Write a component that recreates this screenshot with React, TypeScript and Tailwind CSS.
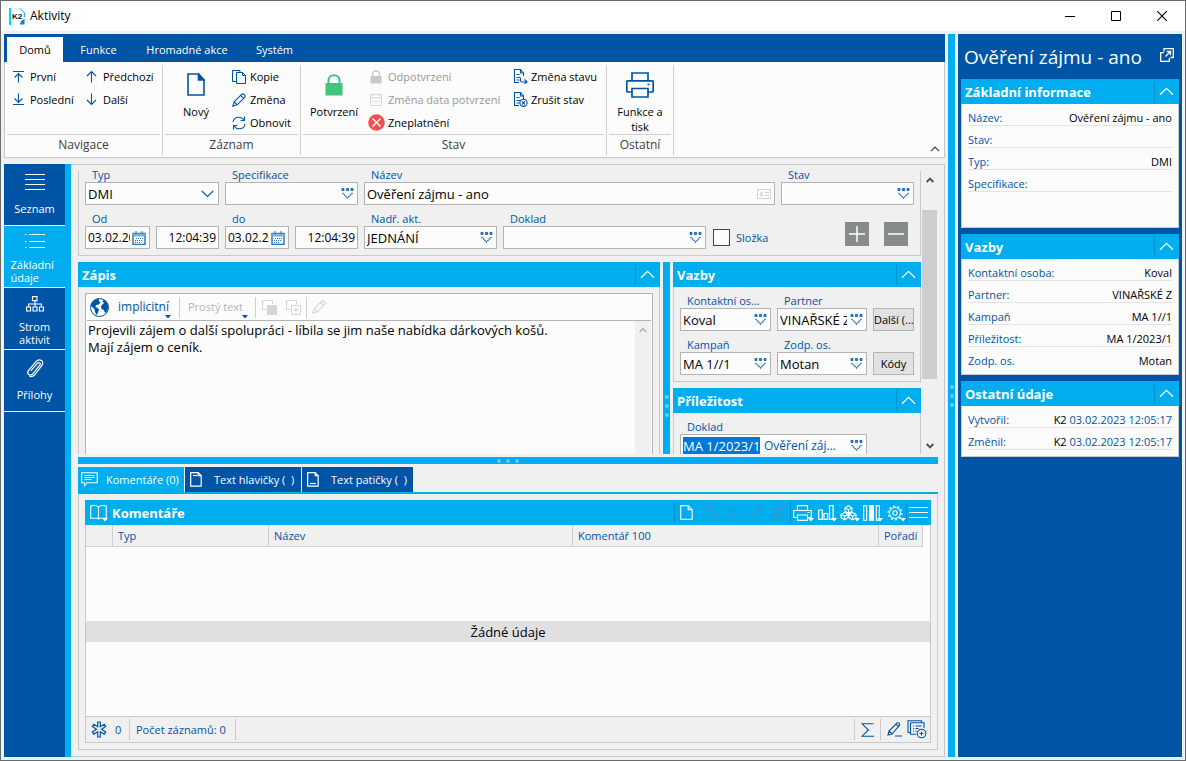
import React from "react";

type IconProps = { className?: string };

function Svg({ w, h, className = "", children, sw = 1.1 }: { w: number; h: number; className?: string; children: React.ReactNode; sw?: number }) {
  return (
    <svg width={w} height={h} viewBox={`0 0 ${w} ${h}`} fill="none" stroke="currentColor" strokeWidth={sw} className={`shrink-0 ${className}`} aria-hidden="true">
      {children}
    </svg>
  );
}

const First = () => <Svg w={13} h={13}><path d="M1 1.5h11M6.5 12.5v-9M2.5 7.500l4-4 4 4" /></Svg>;
const Last = () => <Svg w={13} h={13}><path d="M1 11.5h11M6.5 0.5v9M2.5 5.500l4 4 4-4" /></Svg>;
const Up = () => <Svg w={12} h={13}><path d="M6.5 12.5v-11M2 6l4.500-4.500L11 6" /></Svg>;
const Down = () => <Svg w={12} h={13}><path d="M6.5 0.500v11M2 7l4.500 4.500L11 7" /></Svg>;
const NewDoc = () => <Svg w={18} h={23} sw={1.6}><path d="M1 1h10.500l5.500 6v15H1z" /><path d="M11.500 1v6H17z" fill="currentColor" /></Svg>;
const Copy = () => <Svg w={14} h={14} sw={1}><path d="M5 11.500H.5V.5H8v2" /><path d="M4.500 2.500h6l3 3v8h-9z" /><path d="M10.500 2.500v3h3" /></Svg>;
const Pencil = ({ className }: IconProps) => (
  <Svg w={14} h={14} sw={1.1} className={className}><path d="M.8 13.200l1.400-4.400L9.800 1.200c1.500-1.200 4.200 1.400 3 3L5.200 11.800z" /><path d="M2.200 8.800l3 3M8.600 2.400l3 3" /></Svg>
);
const Refresh = () => <Svg w={14} h={14}><path d="M1 6C1.500 2.500 4 1.200 7 1.200c2.200 0 3.800 1 5 2.800M12.500 .5V4.500H8.700M13 8c-.5 3.500-3 4.800-6 4.800-2.200 0-3.800-1-5-2.800M1.500 13.500V9.500h3.800" /></Svg>;
const Lock = () => (
  <Svg w={18} h={22} sw={2} className="text-[#40c57c]"><path d="M3.500 11V6.500c0-7 11-7 11 0V11" /><path d="M.500 9h17v12.500h-17z" fill="currentColor" stroke="none" /></Svg>
);
const SmallLock = () => (
  <Svg w={16} h={14} sw={1.3} className="text-[#c8c8c8]"><path d="M4.500 7V4c0-4 7-4 7 0v3" /><path d="M2.500 6h11v7.500h-11z" fill="currentColor" stroke="none" /></Svg>
);
const CalGray = () => (
  <Svg w={16} h={13} sw={1} className="text-[#d8d8d8]"><path d="M2.500 1.500h11v11h-11zM2.500 4.500h11M5 0v3M11 0v3" /><path d="M8 6v5M5.500 8.500h5M4.500 6.500v4M11.500 6.500v4" strokeDasharray="1 1" /></Svg>
);
const Cross = () => (
  <Svg w={17} h={17} sw={1.4}><circle cx="8.500" cy="8.500" r="8.300" fill="#f05050" stroke="none" /><path d="M4.500 4.500l8 8M12.500 4.500l-8 8" stroke="#fff" /></Svg>
);
const DocState = ({ off }: { off?: boolean }) => (
  <Svg w={15} h={15}>
    <path d="M6 13.500H1.500v-13h6L10.500 4v3" /><path d="M7.500 .5V4h3M3.500 5.500h3M3.500 8.500h4M3.500 11h3" />
    {off ? <><circle cx="10.500" cy="10.800" r="3.600" /><path d="M9 9.300l3 3M12 9.300l-3 3" /></> : <path d="M7.500 9v2.500c0 1 .5 1.500 1.500 1.500h5M11.500 10.500l2.500 2.500-2.500 2" />}
  </Svg>
);
const Printer = () => (
  <Svg w={28} h={26} sw={1.7}><path d="M6 9V1h16v8M6 20H2c-1 0-1.200-.5-1.200-1.200V10c0-.8.300-1.200 1.200-1.200h24c.9 0 1.200.4 1.200 1.200v8.800c0 .8-.3 1.200-1.200 1.200h-4M6 16.500h16V25H6z" /><path d="M21.500 12.500h2" /></Svg>
);
const Logo = () => (
  <svg width="16" height="17" viewBox="0 0 16 17" aria-hidden="true" className="shrink-0">
    <path d="M0 0h2v17H0z" fill="#00d8f5" />
    <path d="M6 .5h5l4.500 4V13" fill="none" stroke="#b8f0fa" />
    <path d="M11 .5l4.500 4V9" fill="none" stroke="#20b8e8" />
    <path d="M15.500 11v5.500H11c0-3 2-4.500 4.500-5.500z" fill="#1680d8" />
    <text x="3" y="10.500" fontSize="8" fontWeight="900" fontFamily="Liberation Sans, sans-serif" fill="#001428">K2</text>
  </svg>
);
const Lookup = () => (
  <Svg w={13} h={11} sw={1} className="text-[#1f69b0]">
    <path d="M1 .5h2v2H1zM5.500.5h2v2h-2zM10 .5h2v2h-2z" fill="#4f8cc4" /><path d="M1.500 5l5 5 5-5" strokeDasharray="1.600 .5" strokeWidth={1.3} />
  </Svg>
);
const Calendar = () => (
  <Svg w={14} h={14} sw={1} className="text-[#2a70b4]">
    <path d="M1 2.500h12v11H1z" strokeWidth={1.4} /><path d="M1 3h12v2H1z" fill="#9bbfe0" stroke="#6ea3d2" /><path d="M4 0v3M10 0v3" />
    <path d="M4 7.500h7M3 9.500h8M3 11.500h6" strokeDasharray="1 1" />
  </Svg>
);
const CaretDown = () => <Svg w={13} h={8}><path d="M.8 1l5.700 5.500L12.200 1" /></Svg>;
const Chevron = () => <Svg w={15} h={9} sw={1.3}><path d="M1 7.800L7.500 1.300 14 7.800" /></Svg>;
const ScrollArrow = ({ down, light }: { down?: boolean; light?: boolean }) => (
  <Svg w={8} h={6} sw={1.9} className={light ? "text-[#bdbdbd]" : "text-[#505050]"}><path d={down ? "M.7 1L4 4.300 7.300 1" : "M.7 5L4 1.700 7.300 5"} /></Svg>
);
const DropMark = ({ className = "" }: IconProps) => <svg width="6" height="4" viewBox="0 0 6 4" className={className} aria-hidden="true"><path d="M0 0h6L3 3.500z" fill="currentColor" /></svg>;

/* ---------- shared pieces ---------- */

function PanelHeader({ title }: { title: string }) {
  return (
    <div className="flex h-[25px] shrink-0 items-center bg-[#00adef] pl-1 text-[13px] font-bold text-white">
      <h2 className="flex-1 whitespace-nowrap">{title}</h2>
      <button aria-label={`Sbalit ${title}`} className="flex h-[21px] w-[25px] items-center justify-center border-l border-[#0093d0] pr-0.5 text-white"><Chevron /></button>
    </div>
  );
}

function Field({ label, id, className = "", children }: { label: string; id: string; className?: string; children: React.ReactNode }) {
  return (
    <div className={`min-w-0 ${className}`}>
      <label htmlFor={id} className="flex h-[21px] items-end pl-[7px] leading-[15px] whitespace-nowrap text-[#0054a6]">{label}</label>
      {children}
    </div>
  );
}

function TextBox({ id, value = "", icon, right, small, label }: { id: string; value?: string; icon?: React.ReactNode; right?: boolean; small?: boolean; label?: string }) {
  return (
    <div className="flex h-[23px] items-center border border-[#b4b4b4] bg-[#fcfcfc] pl-0.5">
      <input id={id} aria-label={label} defaultValue={value} className={`h-full w-0 min-w-0 flex-1 bg-transparent text-black outline-none ${small ? "text-[12px]" : "text-[13px]"} ${right ? "pr-0.5 text-right" : ""}`} />
      {icon && <button type="button" aria-label={`Vybrat ${id}`} className="flex w-[19px] shrink-0 items-center justify-center pr-px">{icon}</button>}
    </div>
  );
}

function Dots({ vertical }: { vertical?: boolean }) {
  return (
    <div className={`flex gap-[5px] ${vertical ? "flex-col" : ""}`}>
      <i className="size-1 rounded-full bg-[#5fcbf7]" /><i className="size-1 rounded-full bg-[#5fcbf7]" /><i className="size-1 rounded-full bg-[#5fcbf7]" />
    </div>
  );
}

/* ---------- ribbon ---------- */

function Group({ title, className, children }: { title: string; className: string; children: React.ReactNode }) {
  return (
    <section className={`flex shrink-0 flex-col border-r border-[#d0d0d0] px-0.5 ${className}`}>
      <div className="flex h-[69px]">{children}</div>
      <h3 className="h-[21px] border-t border-[#d0d0d0] text-center text-[12px] leading-5 text-[#404040]">{title}</h3>
    </section>
  );
}

function Cmd({ icon, text, disabled, iconBox = "w-[18px]" }: { icon: React.ReactNode; text: string; disabled?: boolean; iconBox?: string }) {
  return (
    <button disabled={disabled} className={`flex h-[23px] items-center whitespace-nowrap ${disabled ? "text-[#989898]" : "text-black"}`}>
      <span className={`flex shrink-0 text-[#0054a6] ${iconBox}`}>{icon}</span>{text}
    </button>
  );
}

function BigCmd({ icon, text, className }: { icon: React.ReactNode; text: string; className: string }) {
  return (
    <button className={`flex shrink-0 flex-col items-center text-black ${className}`}>
      <span className="flex h-[39px] items-center text-[#0054a6]">{icon}</span>
      <span className="leading-[15px]">{text}</span>
    </button>
  );
}

function Ribbon() {
  return (
    <header className="shrink-0">
      <nav className="flex h-7 items-stretch bg-[#0054a6] pt-[3px] pl-[3px] text-white">
        <button className="w-14 bg-[#fcfcfc] text-black">Domů</button>
        <button className="w-[71px]">Funkce</button>
        <button className="w-[106px]">Hromadné akce</button>
        <button className="w-[69px]">Systém</button>
      </nav>
      <div className="flex h-24 border-x border-b border-[#c8c8c8] bg-[#fcfcfc] pt-[3px]">
        <Group title="Navigace" className="h-[90px] w-[158px]">
          <div className="ml-[5px] w-[73px]"><Cmd icon={<First />} text="První" /><Cmd icon={<Last />} text="Poslední" /></div>
          <div><Cmd icon={<Up />} text="Předchozí" /><Cmd icon={<Down />} text="Další" /></div>
        </Group>
        <Group title="Záznam" className="h-[90px] w-[138px]">
          <BigCmd icon={<NewDoc />} text="Nový" className="w-[62px]" />
          <div className="ml-[5px]"><Cmd icon={<Copy />} text="Kopie" /><Cmd icon={<Pencil />} text="Změna" /><Cmd icon={<Refresh />} text="Obnovit" /></div>
        </Group>
        <Group title="Stav" className="h-[90px] w-[306px]">
          <BigCmd icon={<Lock />} text="Potvrzení" className="w-[62px]" />
          <div className="ml-[3px] w-[145px]">
            <Cmd icon={<SmallLock />} text="Odpotvrzení" disabled iconBox="w-5" />
            <Cmd icon={<CalGray />} text="Změna data potvrzení" disabled iconBox="w-5" />
            <Cmd icon={<Cross />} text="Zneplatnění" iconBox="w-5" />
          </div>
          <div><Cmd icon={<DocState />} text="Změna stavu" /><Cmd icon={<DocState off />} text="Zrušit stav" /></div>
        </Group>
        <Group title="Ostatní" className="h-[90px] w-[67px]">
          <BigCmd icon={<Printer />} text="Funkce a tisk" className="w-[62px] px-1" />
        </Group>
        <button aria-label="Sbalit pás karet" className="mr-1 mb-[5px] ml-auto self-end text-[#404040]"><Svg w={10} h={6}><path d="M1 5l4-4 4 4" /></Svg></button>
      </div>
    </header>
  );
}

/* ---------- left navigation ---------- */

function NavItem({ icon, text, active }: { icon: React.ReactNode; text: string; active?: boolean }) {
  return (
    <button className={`flex h-[62px] w-full flex-col items-center justify-between border-b border-white pt-2 pb-[3px] text-white ${active ? "bg-[#00adef]" : ""}`}>
      {icon}
      <span className={`flex min-h-[27px] items-center text-center leading-[13px] ${active ? "w-[48px] text-left" : "w-[46px] justify-center"}`}>{text}</span>
    </button>
  );
}

function SideNav() {
  return (
    <nav className="w-[67px] shrink-0 border-r-[6px] border-[#00adef] bg-[#0054a6]">
      <NavItem text="Seznam" icon={<Svg w={20} h={20} sw={1}><path d="M0 2.500h20M0 7.500h20M0 12.500h20M0 17.500h20" /></Svg>} />
      <NavItem active text="Základní údaje" icon={<Svg w={20} h={15} sw={1}><path d="M4 .5h16M4 7.500h16M4 13.500h16M0 .5h1.500M0 7.500h1.500M0 13.500h1.500" /></Svg>} />
      <NavItem text="Strom aktivit" icon={<Svg w={18} h={16}><path d="M6.500.6h4.500v4H6.500zM.6 11h4v4h-4zM7 11h4v4H7zM13.400 11h4v4h-4zM9 4.600V11M2.600 11V8h12.800v3" /></Svg>} />
      <NavItem text="Přílohy" icon={<Svg w={18} h={20} sw={1.2}><path d="M4.800 12.800L11.500 5.200c1.700-1.600 3.700.2 2.300 2L7 15.600c-2.800 3-6.800.4-4.600-3L10 3.600c3.500-4 9-.2 5.800 4L8.500 17c-1.500 1.500-3.500 2-5.300 1.200" /></Svg>} />
    </nav>
  );
}

/* ---------- form ---------- */

const lookup = <Lookup />;

function HeadForm() {
  return (
    <form className="border-x border-b border-[#c8c8c8] px-1.5 pb-1.5">
      <div className="flex gap-1.5">
        <Field label="Typ" id="typ" className="w-[134px]">
          <div className="relative h-[23px] border border-[#b4b4b4] bg-[#fcfcfc]">
            <select id="typ" defaultValue="DMI" className="h-full w-full appearance-none bg-transparent pl-0.5 text-[13px] text-black outline-none"><option>DMI</option></select>
            <span className="pointer-events-none absolute top-[7px] right-1 text-[#0054a6]"><CaretDown /></span>
          </div>
        </Field>
        <Field label="Specifikace" id="spec" className="w-[133px]"><TextBox id="spec" icon={lookup} /></Field>
        <Field label="Název" id="nazev" className="flex-1">
          <TextBox id="nazev" value="Ověření zájmu - ano" icon={<Svg w={14} h={10} sw={1} className="text-[#d4d4d4]"><path d="M.5.5h13v9H.5zM8 3.500h4M8 6.500h4M3 7.500l1.500-5 1.500 5M3.500 6h2.500" /></Svg>} />
        </Field>
        <Field label="Stav" id="stav" className="w-[133px]"><TextBox id="stav" icon={lookup} /></Field>
      </div>
      <div className="flex items-end gap-1.5">
        <div className="flex w-[134px] items-end gap-1.5">
          <Field label="Od" id="od" className="w-[65px]"><TextBox id="od" value="03.02.2023" icon={<Calendar />} small /></Field>
          <div className="flex-1"><TextBox id="odcas" label="Od čas" value="12:04:39" right small /></div>
        </div>
        <div className="flex w-[133px] items-end gap-1.5">
          <Field label="do" id="do" className="w-16"><TextBox id="do" value="03.02.2023" icon={<Calendar />} small /></Field>
          <div className="flex-1"><TextBox id="docas" label="Do čas" value="12:04:39" right small /></div>
        </div>
        <Field label="Nadř. akt." id="nadr" className="w-[133px]"><TextBox id="nadr" value="JEDNÁNÍ" icon={lookup} /></Field>
        <Field label="Doklad" id="doklad" className="w-[203px]"><TextBox id="doklad" icon={lookup} /></Field>
        <label className="flex h-[23px] flex-1 items-center gap-1.5 pl-px text-[#0054a6]">
          <input type="checkbox" className="size-[17px] appearance-none border border-[#0054a6] bg-[#fcfcfc]" />Složka
        </label>
        <div className="mr-1.5 mb-[3px] flex gap-[15px] text-white">
          <button type="button" aria-label="Přidat" className="flex size-6 items-center justify-center bg-[#878b8b]"><Svg w={18} h={18} sw={1.5}><path d="M9 1v16M1 9h16" /></Svg></button>
          <button type="button" aria-label="Odebrat" className="flex size-6 items-center justify-center bg-[#878b8b]"><Svg w={18} h={18} sw={1.5}><path d="M1 9h16" /></Svg></button>
        </div>
      </div>
    </form>
  );
}

function Notes() {
  return (
    <section className="flex min-w-0 flex-1 flex-col">
      <PanelHeader title="Zápis" />
      <div className="flex min-h-0 flex-1 border-x border-[#c8c8c8] px-1.5 pt-1.5">
        <div className="flex min-w-0 flex-1 flex-col border-x border-t border-[#b4b4b4] bg-[#fcfcfc] px-px">
          <div className="flex h-[27px] shrink-0 items-center border-b border-[#b4b4b4] text-[#0054a6]">
            <svg width="19" height="19" viewBox="0 0 19 19" className="ml-[3px] shrink-0" aria-hidden="true">
              <circle cx="9.500" cy="9.500" r="9" fill="#fcfcfc" stroke="#0054a6" />
              <path d="M2.500 4C4 2 7 .5 9.500.7L8.500 3l2 1-1.500 2.500-3 .5-.5 2 2 1 1.500 1.500-1 3-1.500 2.500L5 14l-.5-3L2 9 1 8c0-1.500.7-3 1.500-4z" fill="#0054a6" />
              <path d="M12 3l2.500-1C17 4 18.500 7 18.200 10l-1.700 4-1.500 1-1-3-2.500-1-.5-3 2-2 1-1z" fill="#0054a6" />
            </svg>
            <button className="relative ml-[9px] w-[53px] text-left text-[12px]">implicitní<DropMark className="absolute right-0 bottom-[-4px]" /></button>
            <span className="mx-2 h-[21px] w-px bg-[#d0d0d0]" />
            <button disabled className="relative w-[60px] text-left whitespace-nowrap text-[#b4b4b4]">Prostý text<DropMark className="absolute right-0 bottom-[-4px] text-[#0054a6]" /></button>
            <span className="ml-[7px] h-[21px] w-px bg-[#d0d0d0]" />
            <Svg w={15} h={15} sw={1} className="ml-[6px] text-[#d4d4d4]"><path d="M4 9.500H.5V.5h10V4" /><path d="M5.500 5.500h9v9h-9z" fill="#d4d4d4" /></Svg>
            <Svg w={15} h={15} sw={1} className="ml-[9px] text-[#d4d4d4]"><path d="M4 9.500H.5V.5h10V4M5.500 5.500h9v9h-9zM10 7.500v5M7.500 10h5" /></Svg>
            <span className="mx-[5px] h-[21px] w-px bg-[#d0d0d0]" />
            <Pencil className="text-[#d4d4d4]" />
          </div>
          <div className="flex min-h-0 flex-1">
            <textarea aria-label="Zápis" className="min-w-0 flex-1 resize-none overflow-hidden bg-transparent pt-px pl-px text-[13px] leading-[17px] text-black outline-none" defaultValue={"Projevili zájem o další spolupráci - líbila se jim naše nabídka dárkových košů.\nMají zájem o ceník."} />
            <div className="flex w-4 shrink-0 justify-center bg-[#f0f0f0] pt-1.5"><ScrollArrow light /></div>
          </div>
        </div>
      </div>
    </section>
  );
}

function Relations() {
  const btn = "h-[23px] w-[41px] shrink-0 border border-[#b4b4b4] bg-[#e1e1e1] whitespace-nowrap text-black";
  return (
    <div className="flex w-[248px] shrink-0 flex-col gap-1.5">
      <section>
        <PanelHeader title="Vazby" />
        <div className="border-x border-b border-[#c8c8c8] px-1.5 pb-1.5">
          <div className="flex items-end gap-1.5">
            <Field label="Kontaktní os..." id="kontakt" className="w-[91px]"><TextBox id="kontakt" value="Koval" icon={lookup} /></Field>
            <Field label="Partner" id="partner" className="flex-1"><TextBox id="partner" value="VINAŘSKÉ Z" icon={lookup} /></Field>
            <button className={btn}>Další (...</button>
          </div>
          <div className="flex items-end gap-1.5">
            <Field label="Kampaň" id="kampan" className="w-[91px]"><TextBox id="kampan" value="MA 1//1" icon={lookup} /></Field>
            <Field label="Zodp. os." id="zodp" className="flex-1"><TextBox id="zodp" value="Motan" icon={lookup} /></Field>
            <button className={btn}>Kódy</button>
          </div>
        </div>
      </section>
      <section>
        <PanelHeader title="Příležitost" />
        <div className="border-x border-b border-[#c8c8c8] px-1.5 pb-1.5">
          <Field label="Doklad" id="pdoklad" className="mr-[47px]">
            <div className="flex h-[23px] items-center border border-[#b4b4b4] bg-[#fcfcfc] pl-0.5 text-[13px]">
              <input id="pdoklad" defaultValue="MA 1/2023/1" className="h-[18px] w-[77px] shrink-0 bg-[#0078d7] text-white outline-none" />
              <span className="min-w-0 flex-1 pl-1 text-[12px] whitespace-nowrap text-[#0054a6]">Ověření záj...</span>
              <button aria-label="Vybrat doklad" className="flex w-[19px] shrink-0 justify-center pr-px">{lookup}</button>
            </div>
          </Field>
        </div>
      </section>
    </div>
  );
}

function Detail() {
  return (
    <div className="flex h-[283px] shrink-0 overflow-hidden">
      <div className="-mt-2.5 flex min-w-0 flex-1 flex-col gap-1.5">
        <HeadForm />
        <div className="flex min-h-0 flex-1 gap-[3px]">
          <Notes />
          <div className="flex w-[7px] shrink-0 justify-center bg-[#00adef] pt-[133px]"><Dots vertical /></div>
          <Relations />
        </div>
      </div>
      <div className="ml-px flex w-[15px] flex-col items-center justify-between pt-1.5 pb-[5px]">
        <ScrollArrow />
        <div className="mt-[27px] mb-auto h-[169px] w-full bg-[#cdcdcd]" />
        <ScrollArrow down />
      </div>
      <div className="w-px" />
    </div>
  );
}

/* ---------- comments ---------- */

const DocMark = ({ foot }: { foot?: boolean }) => (
  <Svg w={12} h={15} sw={1.2}><path d="M.7.700h7.500l3 3v10.500H.7z" /><path d="M8.200.7v3h3" /><path d={foot ? "M3 11.500h6" : "M3 3.500h4"} /></Svg>
);

function ToolIcon({ children, mark, dim, label }: { children: React.ReactNode; mark?: boolean; dim?: boolean; label: string }) {
  return (
    <button aria-label={label} disabled={dim} className={`relative flex h-full w-[23px] items-center justify-center ${dim ? "text-[#2b9ccb]" : "text-white"}`}>
      {children}{mark && <DropMark className="absolute right-0 bottom-[3px]" />}
    </button>
  );
}

function Comments() {
  return (
    <div className="flex min-h-0 flex-1 flex-col">
      <div className="flex h-[27px] shrink-0 gap-px border-b-2 border-[#00adef]" role="tablist">
        <button role="tab" className="flex w-[106px] items-center gap-2 bg-[#00adef] pl-[3px] whitespace-nowrap text-white">
          <Svg w={17} h={15}><path d="M.7.700h15.500v10H6l-2.500 3v-3H.7zM3.500 3.500h10M3.500 5.500h10M3.500 7.500h7" /></Svg>Komentáře (0)
        </button>
        <button role="tab" className="flex w-[116px] items-center gap-3 bg-[#0054a6] pl-[5px] whitespace-pre text-white"><DocMark />{"Text hlavičky (  )"}</button>
        <button role="tab" className="flex w-[111px] items-center gap-3 bg-[#0054a6] pl-[5px] whitespace-pre text-white"><DocMark foot />{"Text patičky (  )"}</button>
      </div>
      <div className="flex min-h-0 flex-1 border-x border-b border-[#c8c8c8] p-1.5">
        <div className="flex min-w-0 flex-1 flex-col border-b border-[#c8c8c8]">
          <div className="flex h-[25px] shrink-0 items-center bg-[#00adef] pr-px text-white">
            <button aria-label="Knihy" className="relative ml-[5px] flex h-full w-[22px] items-center"><Svg w={17} h={15}><path d="M8.500 2v11.500M8.500 2C7 .5 3 .5.700 1v12.200h6.800l1 1 1-1h6.800V1C14 .500 10 .5 8.500 2z" /></Svg><DropMark className="absolute right-1 bottom-[3px]" /></button>
            <h2 className="flex-1 text-[13px] font-bold">Komentáře</h2>
            <span className="h-[21px] w-px bg-[#0093d0]" />
            <ToolIcon label="Nový"><Svg w={13} h={15}><path d="M.7.700h7.500l4 4v9.500H.7zM8.200.7v4h4" /></Svg></ToolIcon>
            <ToolIcon label="Kopie" dim><Copy /></ToolIcon>
            <ToolIcon label="Spustit" dim><Svg w={11} h={12}><path d="M1 1l9 5-9 5z" /></Svg></ToolIcon>
            <ToolIcon label="Změna" dim><Pencil /></ToolIcon>
            <ToolIcon label="Smazat" dim><Svg w={12} h={14}><path d="M0 2.500h12M4 2V.700h4V2M1.500 3v10.300h9V3M4 5v6M6 5v6M8 5v6" /></Svg></ToolIcon>
            <span className="h-[21px] w-px bg-[#0093d0]" />
            <ToolIcon label="Tisk" mark><Svg w={19} h={16} sw={1.2}><path d="M4.500 5.500V.700h10v4.800M4.500 12.500H.7v-7h17.600v7h-3.800M4.500 10h10v5.300h-10zM14.500 7.500h2" /></Svg></ToolIcon>
            <ToolIcon label="Graf" mark><Svg w={16} h={15} sw={1.2}><path d="M.7 5h3.600v9.300H.7zM6 8.500h3.600v5.800H6zM11.500.7h3.600v13.600h-3.600z" /></Svg></ToolIcon>
            <ToolIcon label="Kostka" mark><Svg w={17} h={16}><path d="M8.500.7l3.500 2v3.600l-3.500 2L5 6.300V2.700zM5 2.700l3.500 2 3.500-2M8.500 4.700v3.600M4.500 7.500L8 9.300v3.500l-3.500 2L1 12.800V9.300zM1 9.300l3.500 2L8 9.300M4.500 11.300v3.500M12.500 7.500L16 9.300v3.500l-3.500 2L9 12.800V9.300zM9 9.300l3.500 2L16 9.300M12.500 11.300v3.500" /></Svg></ToolIcon>
            <ToolIcon label="Sloupce" mark><Svg w={17} h={16}><path d="M.7.700h3v14.600h-3zM13.300.7h3v14.600h-3z" /><path d="M6.500.7h4v14.600h-4z" fill="#fff" /></Svg></ToolIcon>
            <ToolIcon label="Nastavení" mark><Svg w={16} h={16}><circle cx="8" cy="8" r="5.500" /><circle cx="8" cy="8" r="2.200" /><circle cx="8" cy="8" r="6.900" strokeDasharray="2.200 2.130" /></Svg></ToolIcon>
            <span className="h-[21px] w-px bg-[#0093d0]" />
            <ToolIcon label="Nabídka"><Svg w={19} h={13} sw={1}><path d="M0 1.500h19M0 6.500h19M0 11.500h19" /></Svg></ToolIcon>
          </div>
          <div className="min-h-0 flex-1 border-x border-[#c8c8c8] bg-[#fcfcfc]">
            <table className="h-full w-full table-fixed border-separate border-spacing-0">
              <thead>
                <tr className="h-[22px] bg-[#f0f0f0] text-left text-[#0054a6] [&>th]:border-r [&>th]:border-b [&>th]:border-[#d0d0d0] [&>th]:px-[5px] [&>th]:font-normal">
                  <th className="w-[27px]" /><th className="w-[156px]">Typ</th><th className="w-[304px]">Název</th><th>Komentář 100</th><th className="w-11">Pořadí</th><td className="w-[7px] bg-[#fcfcfc]" />
                </tr>
              </thead>
              <tbody>
                <tr><td colSpan={6} className="p-0 align-middle"><div className="h-[21px] bg-[#e0e0e0] text-center text-[13px] leading-[22px] text-black">Žádné údaje</div></td></tr>
              </tbody>
            </table>
          </div>
          <footer className="flex h-[26px] shrink-0 items-center border border-b-0 border-[#c8c8c8] text-[#0054a6]">
            <Svg w={16} h={17} sw={1.2} className="ml-[5px]"><path d="M6.700 1h2.600v4.700l4-2.400 1.400 2.200-4.200 2.700 4.200 2.700-1.400 2.200-4-2.400V16H6.700v-5.300l-4 2.400-1.400-2.200 4.200-2.700L1.300 5.500l1.400-2.200 4 2.400z" /></Svg>
            <span className="ml-2 w-[14px]">0</span>
            <span className="mr-1.5 h-[21px] w-px bg-[#c8c8c8]" />
            <span className="w-[93px] whitespace-nowrap">Počet záznamů: 0</span>
            <span className="ml-1.5 h-[21px] w-px bg-[#c8c8c8]" />
            <span className="ml-auto h-[21px] w-px bg-[#c8c8c8]" />
            <button aria-label="Součet" className="mx-1.5"><Svg w={13} h={14}><path d="M12.500 .8H1L7.500 7 1 13.200h12" /></Svg></button>
            <span className="h-[21px] w-px bg-[#c8c8c8]" />
            <button aria-label="Upravit" className="ml-1.5"><Svg w={15} h={15}><path d="M1 13l1-4 8-8c1.500-.8 3 .6 2.500 2.200L5 12zM2 9l3 3M9 2l3 3M8 14h7" /></Svg></button>
            <button aria-label="Přidat do seznamu" className="mr-[3px] ml-[5px]"><Svg w={20} h={19}><path d="M3 12.500H1V.8h13.500v2M3.500 2.800H17V8M3.500 2.800v11.500H9M6 6h1M8.500 6h6M6 8.500h1M8.500 8.500h3M6 11h1M8.500 11h1" /><circle cx="14.500" cy="13.500" r="4.300" /><path d="M12.500 13.500h4M14.500 11.500v4" /></Svg></button>
          </footer>
        </div>
      </div>
    </div>
  );
}

/* ---------- right info panel ---------- */

type Row = { label: string; value?: string; prefix?: string; last?: boolean };

function InfoCard({ title, rows, className = "" }: { title: string; rows: Row[]; className?: string }) {
  return (
    <section>
      <PanelHeader title={title} />
      <dl className={`border border-t-0 border-[#c8c8c8] bg-[#fcfcfc] px-1.5 ${className}`}>
        {rows.map((r) => (
          <div key={r.label} className={`flex h-[22px] items-end justify-between border-b leading-[15px] whitespace-nowrap ${r.last ? "border-transparent" : "border-[#e4e4e4]"}`}>
            <dt className="text-[#0054a6]">{r.label}</dt>
            <dd className={r.prefix ? "text-[#0054a6]" : "text-black"}>{r.prefix && <span className="text-black">{r.prefix} </span>}{r.value}</dd>
          </div>
        ))}
      </dl>
    </section>
  );
}

function InfoPanel() {
  return (
    <aside className="flex w-56 shrink-0 flex-col gap-1.5 bg-[#0054a6] px-[3px]">
      <div className="-mb-1.5 flex h-[45px] shrink-0 items-center pl-[3px] text-white">
        <h1 className="flex-1 text-[19px] whitespace-nowrap">Ověření zájmu - ano</h1>
        <button aria-label="Otevřít" className="mr-[5px] mb-1"><Svg w={14} h={14} sw={1.3}><path d="M4 4.700H.7v8.600h8.600V10M4 3.500V.700h9.300V9.500H10.500M5.500 8.500L10.500 3.500M6.800 3.500h3.700V7.200" /></Svg></button>
      </div>
      <InfoCard title="Základní informace" className="min-h-[124px]" rows={[{ label: "Název:", value: "Ověření zájmu - ano" }, { label: "Stav:" }, { label: "Typ:", value: "DMI" }, { label: "Specifikace:" }]} />
      <InfoCard title="Vazby" className="pb-[5px]" rows={[{ label: "Kontaktní osoba:", value: "Koval" }, { label: "Partner:", value: "VINAŘSKÉ Z" }, { label: "Kampaň", value: "MA 1//1" }, { label: "Příležitost:", value: "MA 1/2023/1" }, { label: "Zodp. os.", value: "Motan", last: true }]} />
      <InfoCard title="Ostatní údaje" className="pb-1.5" rows={[{ label: "Vytvořil:", prefix: "K2", value: "03.02.2023 12:05:17" }, { label: "Změnil:", prefix: "K2", value: "03.02.2023 12:05:17" }]} />
    </aside>
  );
}

export default function App() {
  return (
    <div className="flex h-screen flex-col overflow-hidden border border-[#6b6b6b] bg-[#f0f0f0] font-['Open_Sans','Noto_Sans',sans-serif] text-[11px] leading-4">
      <div className="flex h-[30px] shrink-0 items-center bg-white text-black">
        <span className="ml-2"><Logo /></span>
        <span className="ml-[5px] flex-1 text-[12px]">Aktivity</span>
        <button aria-label="Minimalizovat" className="flex w-[46px] justify-center"><Svg w={10} h={10} sw={1}><path d="M0 5.500h10" /></Svg></button>
        <button aria-label="Maximalizovat" className="flex w-[46px] justify-center"><Svg w={10} h={10} sw={1}><path d="M.5.500h9v9h-9z" /></Svg></button>
        <button aria-label="Zavřít" className="flex w-[46px] justify-center"><Svg w={10} h={10}><path d="M0 0l10 10M10 0L0 10" /></Svg></button>
      </div>
      <div className="flex min-h-0 flex-1 gap-[3px] p-[3px]">
        <div className="flex min-w-0 flex-1 flex-col gap-1.5">
          <Ribbon />
          <div className="flex min-h-0 flex-1">
            <SideNav />
            <main className="flex min-w-0 flex-1 flex-col gap-[3px] border-y border-r border-[#c8c8c8] py-1.5 pr-1.5 pl-[7px]">
              <Detail />
              <div className="flex h-[7px] shrink-0 items-center justify-center bg-[#00adef]"><Dots /></div>
              <Comments />
            </main>
          </div>
        </div>
        <div className="flex w-[7px] shrink-0 items-center justify-center bg-[#00adef]"><Dots vertical /></div>
        <InfoPanel />
      </div>
    </div>
  );
}
